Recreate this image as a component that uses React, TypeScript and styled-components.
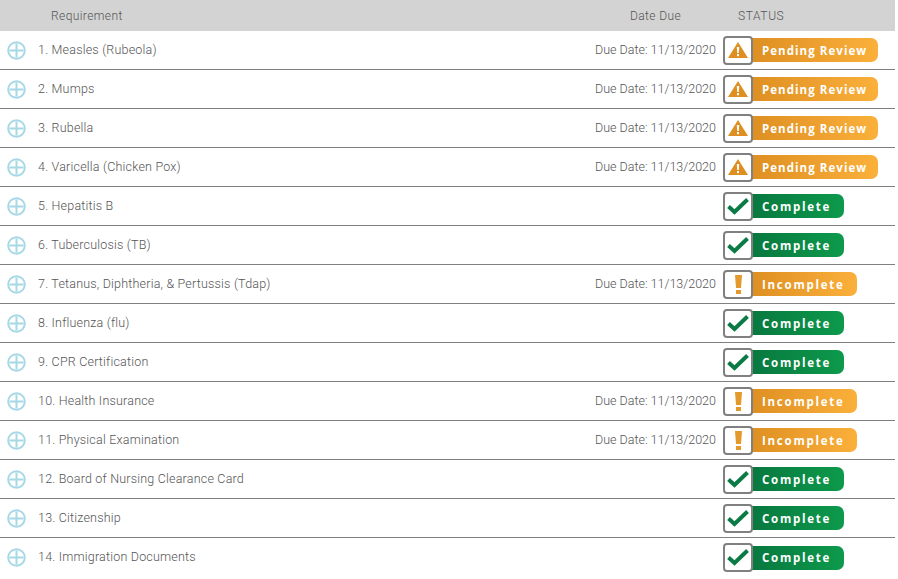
import styled, { createGlobalStyle } from "styled-components";

type Status = "pending" | "complete" | "incomplete";

interface Requirement {
  name: string;
  due?: string;
  status: Status;
}

const requirements: Requirement[] = [
  { name: "1. Measles (Rubeola)", due: "11/13/2020", status: "pending" },
  { name: "2. Mumps", due: "11/13/2020", status: "pending" },
  { name: "3. Rubella", due: "11/13/2020", status: "pending" },
  { name: "4. Varicella (Chicken Pox)", due: "11/13/2020", status: "pending" },
  { name: "5. Hepatitis B", status: "complete" },
  { name: "6. Tuberculosis (TB)", status: "complete" },
  { name: "7. Tetanus, Diphtheria, & Pertussis (Tdap)", due: "11/13/2020", status: "incomplete" },
  { name: "8. Influenza (flu)", status: "complete" },
  { name: "9. CPR Certification", status: "complete" },
  { name: "10. Health Insurance", due: "11/13/2020", status: "incomplete" },
  { name: "11. Physical Examination", due: "11/13/2020", status: "incomplete" },
  { name: "12. Board of Nursing Clearance Card", status: "complete" },
  { name: "13. Citizenship", status: "complete" },
  { name: "14. Immigration Documents", status: "complete" },
];

const labels: Record<Status, string> = {
  pending: "Pending Review",
  complete: "Complete",
  incomplete: "Incomplete",
};

const PlusIcon = () => (
  <svg width="19" height="19" viewBox="0 0 19 19" fill="none" stroke="#a6d8e6" strokeWidth="2">
    <circle cx="9.5" cy="9.5" r="8.3" />
    <path d="M9.5 2.5v14M2.5 9.5h14" />
  </svg>
);

const StatusIcon = ({ status }: { status: Status }) => {
  if (status === "complete") {
    return (
      <svg width="22" height="17" viewBox="0 0 22 17" fill="none">
        <path d="M1.5 8.5l6 5.5L20.5 1.5" stroke="#0b7a45" strokeWidth="4" />
      </svg>
    );
  }
  if (status === "incomplete") {
    return (
      <svg width="7" height="19" viewBox="0 0 7 19">
        <path d="M0 0h7l-1 13H1z" fill="#e4992c" />
        <rect x="1" y="15" width="5" height="4" fill="#e4992c" />
      </svg>
    );
  }
  return (
    <svg width="20" height="16" viewBox="0 0 20 16">
      <path d="M10 0L20 16H0z" fill="#df8f22" />
      <path d="M8.8 5h2.4l-.4 6H9.2z" fill="#fff" />
      <rect x="9" y="12" width="2" height="2.2" fill="#fff" />
    </svg>
  );
};

export default function App() {
  return (
    <>
      <GlobalStyle />
      <Table>
        <HeaderRow>
          <HeaderName>Requirement</HeaderName>
          <HeaderDue>Date Due</HeaderDue>
          <HeaderStatus>STATUS</HeaderStatus>
        </HeaderRow>
        {requirements.map((item) => (
          <Row key={item.name}>
            <Expand>
              <PlusIcon />
            </Expand>
            <Name>{item.name}</Name>
            <Due>{item.due ? `Due Date: ${item.due}` : ""}</Due>
            <StatusCell>
              <IconBox>
                <StatusIcon status={item.status} />
              </IconBox>
              <Pill $status={item.status}>{labels[item.status]}</Pill>
            </StatusCell>
          </Row>
        ))}
      </Table>
    </>
  );
}

const GlobalStyle = createGlobalStyle`
  body {
    margin: 0;
    background: #fff;
    font-family: "Roboto", "Liberation Sans", sans-serif;
  }
`;

const Table = styled.div`
  width: 895px;
`;

const HeaderRow = styled.div`
  height: 31px;
  display: flex;
  align-items: center;
  background: #d3d3d3;
  color: #555;
  font-size: 12px;
  font-weight: 300;
  letter-spacing: 0.4px;
`;

const HeaderName = styled.div`
  margin-left: 51px;
  flex: 1;
`;

const HeaderDue = styled.div`
  width: 108px;
`;

const HeaderStatus = styled.div`
  width: 157px;
  letter-spacing: 0.6px;
`;

const Row = styled.div`
  height: 39px;
  box-sizing: border-box;
  display: flex;
  align-items: center;
  border-bottom: 1px solid #808080;

  &:last-child {
    border-bottom: none;
  }
`;

const Expand = styled.div`
  width: 38px;
  padding-left: 7px;
  box-sizing: border-box;
  display: flex;
  align-items: center;
`;

const Name = styled.div`
  flex: 1;
  padding-bottom: 2px;
  color: #555;
  font-size: 12.5px;
  font-weight: 300;
  letter-spacing: 0.2px;
`;

const Due = styled.div`
  padding-bottom: 2px;
  color: #555;
  font-size: 12.5px;
  font-weight: 300;
  margin-right: 7px;
`;

const StatusCell = styled.div`
  width: 172px;
  display: flex;
  align-items: center;
`;

const IconBox = styled.div`
  width: 30px;
  height: 29px;
  box-sizing: border-box;
  display: flex;
  align-items: center;
  justify-content: center;
  border: 2px solid #808080;
  border-radius: 4px;
  background: #fff;
  position: relative;
  z-index: 1;
`;

const Pill = styled.div<{ $status: Status }>`
  height: 24px;
  margin-left: -2px;
  padding: 0 ${({ $status }) => ($status === "pending" ? "11px" : "12.5px")} 0 11px;
  display: flex;
  align-items: center;
  color: #fff;
  font-family: "Open Sans", sans-serif;
  font-size: 11.5px;
  font-weight: 700;
  letter-spacing: ${({ $status }) => ($status === "pending" ? "1.05px" : "1.75px")};
  white-space: nowrap;
  border-radius: 0 7px 7px 0;
  background: ${({ $status }) =>
    $status === "complete"
      ? "linear-gradient(90deg, #08783f, #0d9a4c)"
      : "linear-gradient(90deg, #de8f22, #fbb03b)"};
`;
